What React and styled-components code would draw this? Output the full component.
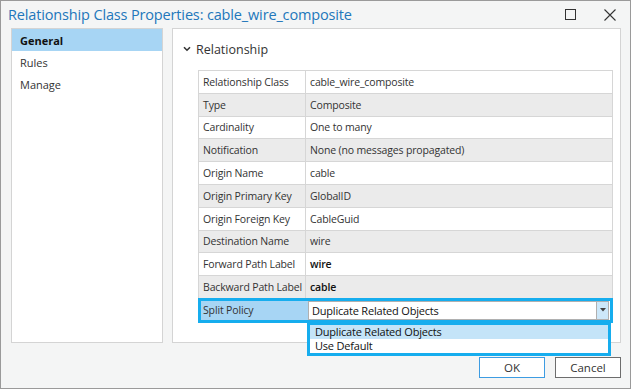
import { styled, createGlobalStyle } from "styled-components";

const GlobalStyle = createGlobalStyle`
  html, body {
    margin: 0;
    padding: 0;
    background: #f4f5f5;
  }
  * {
    box-sizing: border-box;
  }
`;

const rows = [
  { label: "Relationship Class", value: "cable_wire_composite" },
  { label: "Type", value: "Composite" },
  { label: "Cardinality", value: "One to many" },
  { label: "Notification", value: "None (no messages propagated)" },
  { label: "Origin Name", value: "cable" },
  { label: "Origin Primary Key", value: "GlobalID" },
  { label: "Origin Foreign Key", value: "CableGuid" },
  { label: "Destination Name", value: "wire" },
  { label: "Forward Path Label", value: "wire", editable: true },
  { label: "Backward Path Label", value: "cable", editable: true },
];

const navItems = ["General", "Rules", "Manage"];

export default function App() {
  return (
    <>
      <GlobalStyle />
      <Window>
        <TitleBar>
          <Title>Relationship Class Properties: cable_wire_composite</Title>
          <WindowButtons>
            <WinButton aria-label="Maximize">
              <svg width="11" height="11" viewBox="0 0 11 11">
                <rect x="0.5" y="0.5" width="10" height="10" fill="none" stroke="#333" strokeWidth="1" />
              </svg>
            </WinButton>
            <WinButton aria-label="Close">
              <svg width="12" height="12" viewBox="0 0 12 12">
                <path d="M0.5 0.5 L11.5 11.5 M11.5 0.5 L0.5 11.5" stroke="#333" strokeWidth="1.1" />
              </svg>
            </WinButton>
          </WindowButtons>
        </TitleBar>

        <Body>
          <Nav>
            {navItems.map((item, i) => (
              <NavItem key={item} $active={i === 0}>
                {item}
              </NavItem>
            ))}
          </Nav>

          <Panel>
            <SectionHeader>
              <svg width="8" height="6" viewBox="0 0 8 6">
                <polyline points="1,1.2 4,4.2 7,1.2" fill="none" stroke="#333" strokeWidth="1.6" />
              </svg>
              <span>Relationship</span>
            </SectionHeader>

            <Table>
              {rows.map((r, i) => (
                <Row key={r.label} $alt={i % 2 === 1}>
                  <Label>{r.label}</Label>
                  <Value $editable={r.editable}>{r.value}</Value>
                </Row>
              ))}
              <SelectedRow>
                <SelectedLabel>Split Policy</SelectedLabel>
                <ComboCell>
                  <Combo>
                    <ComboText>Duplicate Related Objects</ComboText>
                    <ComboArrow>
                      <svg width="6" height="4" viewBox="0 0 6 4">
                        <polygon points="0,0 6,0 3,3.5" fill="#444" />
                      </svg>
                    </ComboArrow>
                  </Combo>
                  <DropList>
                    <DropItem $highlight>Duplicate Related Objects</DropItem>
                    <DropItem>Use Default</DropItem>
                  </DropList>
                </ComboCell>
              </SelectedRow>
            </Table>
          </Panel>
        </Body>

        <Footer>
          <Button $primary>OK</Button>
          <Button>Cancel</Button>
        </Footer>
      </Window>
    </>
  );
}

const Window = styled.div`
  width: 631px;
  height: 389px;
  border: 1px solid #9a9a9a;
  background: #f4f5f5;
  display: flex;
  flex-direction: column;
  font-family: "Open Sans", "Noto Sans", sans-serif;
  color: #333;
`;

const TitleBar = styled.div`
  height: 27px;
  display: flex;
  align-items: center;
  justify-content: space-between;
  padding-left: 7px;
`;

const Title = styled.div`
  font-size: 14.5px;
  color: #2277bb;
  letter-spacing: -0.15px;
`;

const WindowButtons = styled.div`
  display: flex;
  align-items: center;
  height: 100%;
`;

const WinButton = styled.div`
  width: 40px;
  height: 100%;
  display: flex;
  align-items: center;
  justify-content: center;
`;

const Body = styled.div`
  display: flex;
  gap: 9px;
  padding: 0 9px 0 10px;
  height: 315px;
`;

const Nav = styled.div`
  width: 153px;
  height: 100%;
  background: #fff;
  border: 1px solid #d4d4d4;
  display: flex;
  flex-direction: column;
`;

const NavItem = styled.div`
  height: 22px;
  display: flex;
  align-items: center;
  padding-left: 8px;
  font-size: 11px;
  color: ${({ $active }) => ($active ? "#111" : "#333")};
  font-weight: ${({ $active }) => ($active ? 700 : 400)};
  background: ${({ $active }) => ($active ? "#a7d5f4" : "transparent")};
`;

const Panel = styled.div`
  flex: 1;
  height: 100%;
  background: #fff;
  border: 1px solid #d4d4d4;
  padding: 9px 7px 0 10px;
  display: flex;
  flex-direction: column;
`;

const SectionHeader = styled.div`
  height: 22px;
  display: flex;
  align-items: center;
  gap: 5px;
  font-size: 12.5px;
  color: #333;
  margin-bottom: 10px;
`;

const Table = styled.div`
  margin-left: 15px;
  width: 415px;
  border: 1px solid #d6d6d6;
  border-bottom: none;
  display: flex;
  flex-direction: column;
  font-size: 10.5px;
  letter-spacing: -0.15px;
`;

const Row = styled.div`
  display: grid;
  grid-template-columns: 107px 1fr;
  height: 22.8px;
  border-bottom: 1px solid #d6d6d6;
  background: ${({ $alt }) => ($alt ? "#ebebeb" : "#fff")};
`;

const Label = styled.div`
  display: flex;
  align-items: center;
  padding-left: 4px;
  border-right: 1px solid #d6d6d6;
  color: #333;
  white-space: nowrap;
`;

const Value = styled.div`
  display: flex;
  align-items: center;
  padding-left: 4px;
  color: ${({ $editable }) => ($editable ? "#111" : "#333")};
  font-weight: ${({ $editable }) => ($editable ? 600 : 400)};
  white-space: nowrap;
`;

const SelectedRow = styled.div`
  position: relative;
  display: grid;
  grid-template-columns: 107px 1fr;
  height: 25px;
  margin: -1px -1px 0;
  border: 3px solid #16adee;
`;

const SelectedLabel = styled.div`
  display: flex;
  align-items: center;
  padding-left: 2px;
  background: #a7d5f4;
  color: #333;
`;

const ComboCell = styled.div`
  position: relative;
  padding-right: 1px;
`;

const Combo = styled.div`
  height: 100%;
  display: flex;
  background: #fff;
  border: 1px solid #b0b0b0;
`;

const ComboText = styled.div`
  flex: 1;
  display: flex;
  align-items: center;
  padding-left: 3px;
  color: #111;
  font-size: 11px;
  letter-spacing: -0.2px;
`;

const ComboArrow = styled.div`
  width: 12px;
  display: flex;
  align-items: center;
  justify-content: center;
  background: #cde8fa;
  border-left: 1px solid #b0b0b0;
`;

const DropList = styled.div`
  position: absolute;
  top: calc(100% + 3px);
  left: -1px;
  right: -1px;
  background: #fff;
  border: 3px solid #16adee;
  border-top-width: 2px;
  z-index: 2;
`;

const DropItem = styled.div`
  height: 14px;
  display: flex;
  align-items: center;
  padding-left: 5px;
  font-size: 11px;
  letter-spacing: -0.2px;
  color: #111;
  background: ${({ $highlight }) => ($highlight ? "#c4e4f8" : "#fff")};
`;

const Footer = styled.div`
  flex: 1;
  display: flex;
  justify-content: flex-end;
  align-items: flex-start;
  gap: 10px;
  padding: 14px 9px 0 0;
`;

const Button = styled.div`
  width: 66px;
  height: 21px;
  display: flex;
  align-items: center;
  justify-content: center;
  background: #fff;
  border: 1px solid ${({ $primary }) => ($primary ? "#3d9ce2" : "#6d6d6d")};
  font-size: 11.5px;
  color: #333;
`;
